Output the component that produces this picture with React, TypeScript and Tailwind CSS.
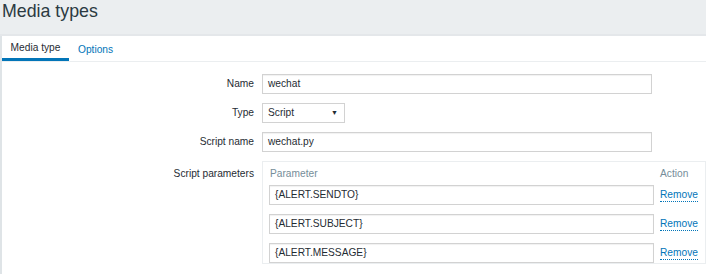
import React from "react";

const params = ["{ALERT.SENDTO}", "{ALERT.SUBJECT}", "{ALERT.MESSAGE}"];

function TextBox({ value, width }: { value: string; width: string }) {
  return (
    <div
      className={`flex h-[20px] items-center border border-[#d2d2d2] bg-white px-[5px] text-[10.2px] text-[#1f2c33] shadow-[inset_0_1px_1px_rgba(0,0,0,0.06)] ${width}`}
    >
      {value}
    </div>
  );
}

function Row({ label, children }: { label: string; children: React.ReactNode }) {
  return (
    <div className="grid grid-cols-[260px_minmax(0,1fr)] items-center">
      <div className="pr-[8px] text-right text-[10.2px] text-[#1f2c33]">{label}</div>
      <div>{children}</div>
    </div>
  );
}

export default function App() {
  return (
    <main className="h-[274px] w-[706px] overflow-hidden bg-[#ebeef0] font-['Liberation_Sans',Arial,sans-serif]">
      <header className="h-[34px] pl-[2px]">
        <h1 className="text-[17.8px] leading-[22px] text-[#2b3a42]">Media types</h1>
      </header>

      <div className="h-[2px] bg-[#e4e7ea]" />

      <section className="h-full border-l-2 border-[#dfe4e7] bg-white">
        <nav className="flex h-[26px] items-end border-b border-[#ebeef0] text-[10.2px]">
          <div className="flex h-full w-[67px] items-center justify-center border-b-[3px] border-[#0275b8] pt-[2px] text-[#1f2c33]">
            Media type
          </div>
          <div className="flex h-full items-center px-[9px] pt-[2px] text-[#0275b8]">Options</div>
        </nav>

        <div className="flex flex-col gap-[9px] pt-[12px]">
          <Row label="Name">
            <TextBox value="wechat" width="w-[390px]" />
          </Row>
          <Row label="Type">
            <div className="flex h-[20px] w-[83px] items-center justify-between border border-[#d2d2d2] bg-white pl-[5px] pr-[6px] text-[10.2px] text-[#1f2c33]">
              <span>Script</span>
              <span className="text-[7px]">▼</span>
            </div>
          </Row>
          <Row label="Script name">
            <TextBox value="wechat.py" width="w-[390px]" />
          </Row>

          <div className="grid grid-cols-[260px_minmax(0,1fr)]">
            <div className="pr-[8px] pt-[5px] text-right text-[10.2px] text-[#1f2c33]">
              Script parameters
            </div>
            <div className="border border-[#ebeef0] pl-[6px] pt-[4px]">
              <div className="flex h-[16px] items-center text-[10.2px] text-[#768d99]">
                <span className="w-[391px] pl-[1px]">Parameter</span>
                <span>Action</span>
              </div>
              <ul className="mt-[3px] flex flex-col gap-[9px]">
                {params.map((p) => (
                  <li key={p} className="flex items-center">
                    <TextBox value={p} width="w-[385px]" />
                    <a className="ml-[6px] border-b border-dotted border-[#0275b8] text-[10.2px] leading-[12px] text-[#0275b8]">
                      Remove
                    </a>
                  </li>
                ))}
              </ul>
            </div>
          </div>
        </div>
      </section>
    </main>
  );
}
